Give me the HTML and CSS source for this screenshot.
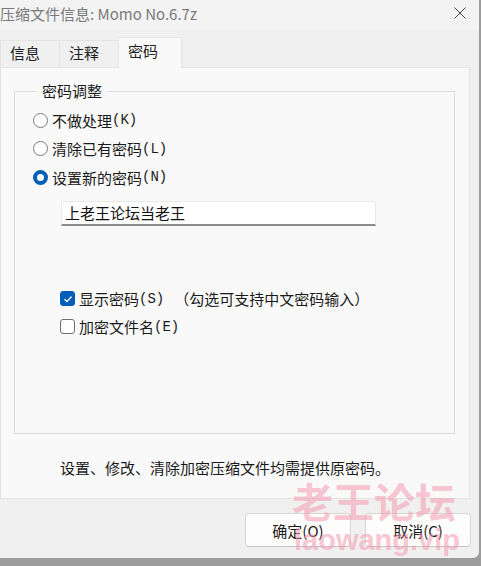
FILE: index.html
```html
<!DOCTYPE html>
<html lang="zh-CN">
<head>
  <meta charset="UTF-8">
  <title>压缩文件信息</title>
  <link rel="stylesheet" href="styles.css">
</head>
<body>

<div class="window">
  <div class="titlebar">
    <span class="title">压缩文件信息: Momo No.6.7z</span>
    <svg class="close" width="12" height="12" viewBox="0 0 12 12">
      <path d="M0.5 0.5 L11.5 11.5 M11.5 0.5 L0.5 11.5" stroke="#444" stroke-width="1" fill="none"/>
    </svg>
  </div>

  <div class="tabs">
    <div class="tab">信息</div>
    <div class="tab">注释</div>
    <div class="tab active">密码</div>
  </div>

  <div class="panel">
    <fieldset class="group">
      <legend>密码调整</legend>
      <div class="radio-row"><span class="radio"></span>不做处理<span class="key">(K)</span></div>
      <div class="radio-row"><span class="radio"></span>清除已有密码<span class="key">(L)</span></div>
      <div class="radio-row"><span class="radio on"></span>设置新的密码<span class="key">(N)</span></div>

      <div class="pwd">上老王论坛当老王</div>

      <div class="check-row">
        <span class="check on">
          <svg width="10" height="10" viewBox="0 0 10 10"><path d="M1.5 5.2 L4 7.5 L8.5 2.5" stroke="#fff" stroke-width="1.3" fill="none"/></svg>
        </span>
        显示密码<span class="key">(S)</span>
        <span class="hint">（勾选可支持中文密码输入）</span>
      </div>
      <div class="check-row"><span class="check"></span>加密文件名<span class="key">(E)</span></div>
    </fieldset>

    <p class="note">设置、修改、清除加密压缩文件均需提供原密码。</p>
  </div>

  <div class="footer">
    <button class="btn">确定(O)</button>
    <button class="btn">取消(C)</button>
  </div>

  <div class="watermark">
    <div class="wm-cn">老王论坛</div>
    <div class="wm-en">laowang.vip</div>
  </div>
</div>

</body>
</html>
```

FILE: styles.css
```css
* {
  margin: 0;
  padding: 0;
  box-sizing: border-box;
}

body {
  width: 481px;
  height: 566px;
  overflow: hidden;
  background: #9c9c9c;
  font-family: "Noto Sans CJK SC", "Noto Sans", sans-serif;
  font-size: 15px;
  color: #1a1a1a;
}

.window {
  position: relative;
  width: 479px;
  height: 558px;
  background: #f0f0f0;
  border-bottom-right-radius: 6px;
  overflow: hidden;
}

.titlebar {
  height: 30px;
  background: #f3f3f3;
  display: flex;
  align-items: center;
  justify-content: space-between;
  padding: 0 13px 4px 0;
}

.title {
  font-size: 15px;
  color: #7a7a7a;
}

.tabs {
  display: flex;
  align-items: flex-end;
  height: 37px;
  padding-top: 7px;
}

.tab {
  height: 27px;
  border: 1px solid #e3e3e3;
  border-bottom: none;
  background: #f0f0f0;
  padding: 0 9px;
  width: 60px;
  line-height: 24px;
  color: #222;
}

.tab + .tab {
  margin-left: -1px;
}

.tab.active {
  height: 31px;
  width: 64px;
  background: #f9f9f9;
  border-color: #e6e6e6;
  padding-top: 1px;
  margin-bottom: -1px;
  position: relative;
}

.panel {
  width: 470px;
  height: 432px;
  background: #f9f9f9;
  border: 1px solid #e3e3e3;
  padding: 13px 14px 0 13px;
}

.group {
  height: 353px;
  border: 1px solid #dcdcdc;
  padding: 5px 0 0 17px;
}

.group legend {
  margin-left: 5px;
  padding: 0 5px;
  line-height: 20px;
}

.radio-row {
  display: flex;
  align-items: center;
  height: 28.5px;
  margin-left: 1px;
}

.radio {
  width: 15px;
  height: 15px;
  border: 1px solid #7a7a7a;
  border-radius: 50%;
  background: #fff;
  margin-right: 4px;
}

.radio.on {
  border: 4.5px solid #005fb8;
  background: #fff;
}

.key {
  font-family: "Liberation Mono", monospace;
  font-size: 14px;
}

.pwd {
  width: 315px;
  height: 25px;
  margin: 9px 0 0 29px;
  background: #fff;
  border: 1px solid #e8e8e8;
  border-bottom: 2px solid #8a8a8a;
  border-radius: 3px 3px 0 0;
  padding-left: 3px;
  line-height: 21px;
  color: #111;
}

.check-row {
  display: flex;
  align-items: center;
  height: 28px;
  margin-left: 28px;
}

.pwd + .check-row {
  margin-top: 59px;
}

.check {
  width: 15px;
  height: 15px;
  border: 1px solid #6f6f6f;
  border-radius: 3px;
  background: #fff;
  margin-right: 4px;
  display: flex;
  align-items: center;
  justify-content: center;
}

.check.on {
  background: #005fb8;
  border-color: #005fb8;
}

.hint {
  margin-left: 10px;
}

.note {
  margin: 23px 0 0 46px;
}

.footer {
  display: flex;
  justify-content: flex-end;
  gap: 14px;
  padding: 14px 8px 0 0;
}

.btn {
  width: 106px;
  height: 34px;
  background: #fdfdfd;
  border: 1px solid #d6d6d6;
  border-bottom-color: #c4c4c4;
  border-radius: 4px;
  font-family: "Noto Sans CJK SC", "Noto Sans", sans-serif;
  font-size: 15px;
  color: #1a1a1a;
}

.watermark {
  position: absolute;
  left: 292px;
  top: 475px;
  color: rgba(246, 150, 175, 0.55);
  font-weight: 700;
  pointer-events: none;
}

.wm-cn {
  font-size: 41px;
  line-height: 50px;
}

.wm-en {
  font-family: "Liberation Sans", sans-serif;
  font-size: 29px;
  line-height: 30px;
  margin-left: 2px;
}
```
